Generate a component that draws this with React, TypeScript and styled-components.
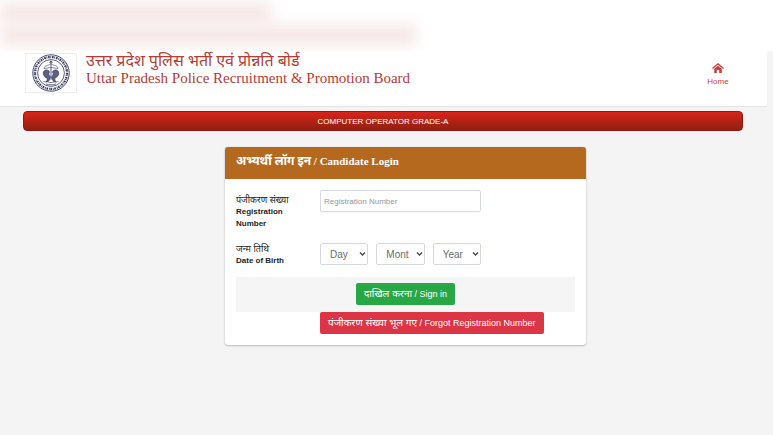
import React from "react";
import styled, { createGlobalStyle } from "styled-components";

const GlobalStyle = createGlobalStyle`
  * { box-sizing: border-box; }
  body {
    margin: 0;
    min-height: 100vh;
    background: #f4f4f4;
    color: #222;
    font-family: "Liberation Sans", "Noto Sans Devanagari", sans-serif;
    font-size: 8px;
  }
`;

const Haze = styled.div`
  height: 51px;
  padding-top: 2px;
  overflow: hidden;
  background: #fff;
`;

const HazeLine = styled.div<{ $width: number }>`
  width: ${(p) => p.$width}%;
  height: 22px;
  background: #f6e9e8;
  filter: blur(7px);
`;

const Header = styled.header`
  display: flex;
  justify-content: space-between;
  margin-right: 6px;
  padding: 2px 36px 0 25px;
  height: 56px;
  background: #fff;
  border-bottom: 1px solid #e4e4e4;
`;

const Brand = styled.div`
  display: flex;
  gap: 9px;
`;

const LogoFrame = styled.div`
  width: 52px;
  height: 40px;
  border: 1px solid #eee;
  display: flex;
  justify-content: center;
`;

const Titles = styled.div`
  color: #b83a33;
  font-family: "Liberation Serif", "Noto Sans Devanagari", serif;
  white-space: nowrap;
`;

const HindiTitle = styled.div`
  font-size: 16px;
  line-height: 16px;
`;

const Title = styled.h1`
  margin: 0;
  font-size: 15px;
  font-weight: 400;
  line-height: 18px;
`;

const HomeLink = styled.a`
  display: flex;
  flex-direction: column;
  align-items: center;
  gap: 4px;
  width: 26px;
  padding-top: 10px;
  color: #c9403c;
  font-size: 8px;
  line-height: 10px;
  text-decoration: none;
`;

const Banner = styled.div`
  margin: 4px 30px 16px 23px;
  height: 20px;
  border: 1px solid #9a1612;
  border-radius: 4px;
  background: linear-gradient(#d8241a, #8f2011);
  color: #fff;
  font-size: 8px;
  line-height: 19px;
  text-align: center;
`;

const Shift = styled.div`
  padding-left: 38px;
`;

const Card = styled.main`
  width: 47%;
  min-width: 361px;
  margin: 0 auto;
  background: #fff;
  border-radius: 3px;
  box-shadow: 0 0 1px #bbb, 0 1px 2px #bbb;
`;

const CardTitle = styled.h2`
  margin: 0;
  padding: 0 11px;
  height: 32px;
  border-radius: 3px 3px 0 0;
  background: #b5691f;
  color: #fff;
  font-family: "Liberation Serif", "Noto Sans Devanagari", serif;
  font-size: 11px;
  line-height: 28px;
`;

const TitleHindi = styled.span`
  font-size: 12px;
`;

const Form = styled.form`
  padding: 11px;
`;

const Row = styled.div<{ $height: number }>`
  display: grid;
  grid-template-columns: 84px 161px;
  min-height: ${(p) => p.$height}px;
`;

const Label = styled.label<{ $top: number }>`
  padding: ${(p) => p.$top}px 24px 0 0;
  font-size: 8px;
  font-weight: 700;
  line-height: 12px;
`;

const LabelHindi = styled.span`
  display: block;
  font-size: 9px;
  font-weight: 400;
  white-space: nowrap;
`;

const TextInput = styled.input`
  display: block;
  width: 100%;
  height: 22px;
  padding: 0 3px;
  border: 1px solid #d5d9dd;
  border-radius: 2px;
  font: 8px "Liberation Sans", sans-serif;
  &::placeholder { color: #92989e; opacity: 1; }
`;

const Selects = styled.div`
  display: grid;
  grid-template-columns: repeat(3, 1fr);
  gap: 8px;
`;

const Picker = styled.div`
  display: grid;
  height: 22px;
  align-items: center;
  & > * { grid-area: 1 / 1; }
  & > svg { justify-self: end; margin-right: 2px; pointer-events: none; }
`;

const SelectBox = styled.select`
  appearance: none;
  width: 100%;
  height: 22px;
  padding: 0 15px 0 9px;
  border: 1px solid #d5d9dd;
  border-radius: 2px;
  background: #fff;
  color: #666c72;
  font: 10px "Liberation Sans", sans-serif;
  text-overflow: clip;
`;

const Actions = styled.div`
  display: flex;
  justify-content: center;
  padding: 6px 0 7px;
  background: #f5f5f5;
`;

const Button = styled.button<{ $color: string }>`
  height: 22px;
  padding: 0 8px;
  border: 0;
  border-radius: 2px;
  background: ${(p) => p.$color};
  color: #fff;
  font: 9px/20px "Liberation Sans", "Noto Sans Devanagari", sans-serif;
  white-space: nowrap;
`;

const ButtonHindi = styled.span`
  font-size: 10px;
`;

const Forgot = styled.div`
  display: flex;
  padding-left: 84px;
`;

const Emblem = () => (
  <svg width="40" height="38" viewBox="0 0 40 38" fill="none" stroke="#34385a" aria-hidden="true">
    <circle cx="20" cy="19" r="18.200" strokeWidth="0.9" />
    <circle cx="20" cy="19" r="16" strokeWidth="2.300" strokeDasharray="1.600 .7 .8 .9" />
    <circle cx="20" cy="19" r="13.400" strokeWidth="0.8" />
    <path d="M20 7v17M18.500 9 20 6.800 21.500 9" strokeWidth="0.8" />
    <path d="M13 14.500c1-4 4-2 7-5 3 3 6 1 7 5M13 14.500l7-1 7 1" strokeWidth="0.6" />
    <path d="M18.500 18c-.5-2.500-5-3-6 0-.8 3 1 5 4 6.500l-1 3.500c3-1 4.500-3 3.500-5.500-.8-1.500-2-2-.5-4.500zM21.500 18c.5-2.500 5-3 6 0 .8 3-1 5-4 6.500l1 3.500c-3-1-4.500-3-3.500-5.500.8-1.500 2-2 .5-4.500z" fill="#5d6284" strokeWidth="0.7" />
    <path d="M12.500 27.500c2 1 3-.5 5 .5s3 .5 5 0 3 .5 5-.5M15 30c3 1 7 1 10 0" strokeWidth="0.7" />
  </svg>
);

const HomeIcon = () => (
  <svg width="12" height="10" viewBox="0 0 12 10" aria-hidden="true">
    <path d="M.5 5.500 6 .9l5.500 4.600" fill="none" stroke="#c9403c" strokeWidth="1.300" />
    <path d="M2.200 5.800 6 2.700l3.800 3.100V10H7.200V7H4.800v3H2.200z" fill="#c9403c" />
  </svg>
);

const Chevron = () => (
  <svg width="7" height="6" viewBox="0 0 7 6" aria-hidden="true">
    <path d="M1 1.500 3.500 4 6 1.500" fill="none" stroke="#444" strokeWidth="1.300" />
  </svg>
);

export default function App() {
  return (
    <>
      <GlobalStyle />
      <Haze aria-hidden="true">
        <HazeLine $width={35} />
        <HazeLine $width={54} />
      </Haze>
      <Header>
        <Brand>
          <LogoFrame><Emblem /></LogoFrame>
          <Titles>
            <HindiTitle lang="hi">उत्तर प्रदेश पुलिस भर्ती एवं प्रोन्नति बोर्ड</HindiTitle>
            <Title>Uttar Pradesh Police Recruitment &amp; Promotion Board</Title>
          </Titles>
        </Brand>
        <HomeLink href="#"><HomeIcon />Home</HomeLink>
      </Header>
      <Banner>COMPUTER OPERATOR GRADE-A</Banner>
      <Shift>
        <Card>
          <CardTitle><TitleHindi lang="hi">अभ्यर्थी लॉग इन</TitleHindi> / Candidate Login</CardTitle>
          <Form onSubmit={(e) => e.preventDefault()}>
            <Row $height={53}>
              <Label htmlFor="registration" $top={4}>
                <LabelHindi lang="hi">पंजीकरण संख्या</LabelHindi>Registration Number
              </Label>
              <div><TextInput id="registration" placeholder="Registration Number" /></div>
            </Row>
            <Row $height={34}>
              <Label htmlFor="day" $top={0}><LabelHindi lang="hi">जन्म तिथि</LabelHindi>Date of Birth</Label>
              <Selects>
                <Picker><SelectBox id="day"><option>Day</option></SelectBox><Chevron /></Picker>
                <Picker><SelectBox aria-label="Month"><option>Month</option></SelectBox><Chevron /></Picker>
                <Picker><SelectBox aria-label="Year"><option>Year</option></SelectBox><Chevron /></Picker>
              </Selects>
            </Row>
            <Actions>
              <Button type="submit" $color="#28a745">
                <ButtonHindi lang="hi">दाखिल करना</ButtonHindi> / Sign in
              </Button>
            </Actions>
            <Forgot>
              <Button type="button" $color="#dc3545">
                <ButtonHindi lang="hi">पंजीकरण संख्या भूल गए</ButtonHindi> / Forgot Registration Number
              </Button>
            </Forgot>
          </Form>
        </Card>
      </Shift>
    </>
  );
}
